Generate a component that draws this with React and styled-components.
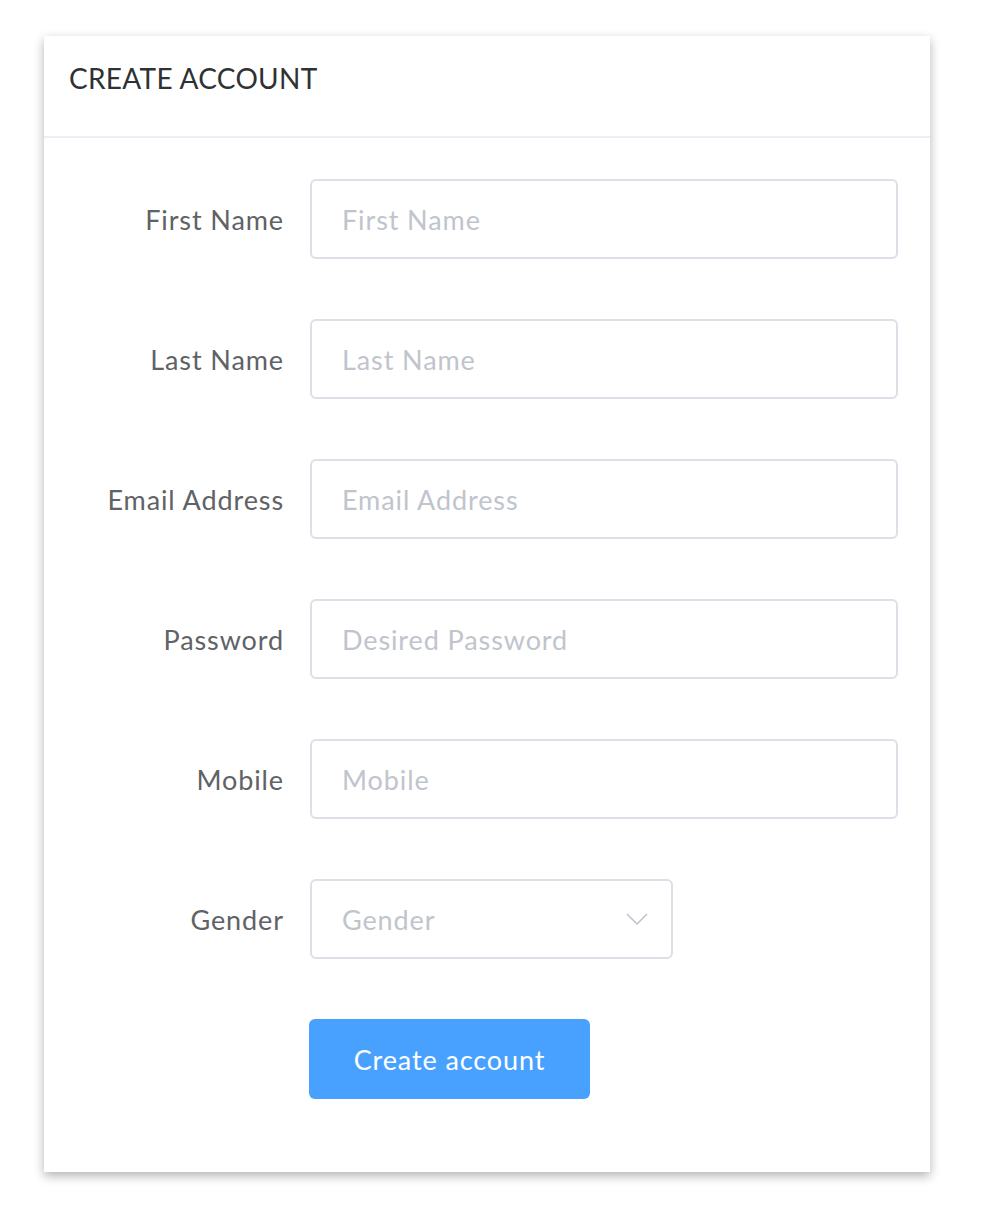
import React from 'react'
import styled, { createGlobalStyle } from 'styled-components'

const GlobalStyle = createGlobalStyle`
  body {
    margin: 0;
    background: #ffffff;
    font-family: Lato, "Open Sans", sans-serif;
  }
`

const Page = styled.div`
  padding: 36px 0 40px 44px;
`

const Card = styled.div`
  width: 886px;
  height: 1136px;
  background: #fff;
  box-shadow: 0 4px 10px rgba(0, 0, 0, 0.3);
  box-sizing: border-box;
`

const CardHeader = styled.div`
  height: 102px;
  box-sizing: border-box;
  border-bottom: 2px solid #ebeef5;
  padding: 0 25px 16px;
  display: flex;
  align-items: center;
`

const Title = styled.h2`
  margin: 0;
  font-size: 28px;
  font-weight: 400;
  color: #303133;
  letter-spacing: 0.3px;
`

const Form = styled.form`
  padding: 41px 32px 0 0;
  display: flex;
  flex-direction: column;
  gap: 60px;
`

const Row = styled.div`
  display: flex;
  align-items: center;
`

const Label = styled.label`
  width: 240px;
  flex: none;
  text-align: right;
  padding-right: 26px;
  font-size: 27px;
  letter-spacing: 0.9px;
  color: #606266;
`

const Field = styled.input`
  width: 588px;
  height: 80px;
  box-sizing: border-box;
  border: 2px solid #dcdfe6;
  border-radius: 6px;
  padding: 0 30px;
  font-family: inherit;
  font-size: 27px;
  letter-spacing: 0.9px;
  color: #606266;
  outline: none;
  &::placeholder {
    color: #c0c4cc;
  }
`

const SelectBox = styled.div`
  width: 363px;
  height: 80px;
  box-sizing: border-box;
  border: 2px solid #dcdfe6;
  border-radius: 6px;
  padding: 0 23px 0 30px;
  display: flex;
  align-items: center;
  justify-content: space-between;
  font-size: 27px;
  letter-spacing: 0.9px;
  color: #c0c4cc;
`

const Actions = styled.div`
  padding-left: 265px;
`

const Button = styled.button`
  width: 281px;
  height: 80px;
  border: none;
  border-radius: 6px;
  background: #49a1ff;
  color: #fff;
  font-family: inherit;
  font-size: 27px;
  letter-spacing: 0.9px;
  cursor: pointer;
`

const fields = [
  { label: 'First Name', placeholder: 'First Name' },
  { label: 'Last Name', placeholder: 'Last Name' },
  { label: 'Email Address', placeholder: 'Email Address' },
  { label: 'Password', placeholder: 'Desired Password', type: 'password' },
  { label: 'Mobile', placeholder: 'Mobile' },
]

export default function App() {
  return (
    <Page>
      <GlobalStyle />
      <Card>
        <CardHeader>
          <Title>CREATE ACCOUNT</Title>
        </CardHeader>
        <Form onSubmit={e => e.preventDefault()}>
          {fields.map(f => (
            <Row key={f.label}>
              <Label>{f.label}</Label>
              <Field type={f.type || 'text'} placeholder={f.placeholder} />
            </Row>
          ))}
          <Row>
            <Label>Gender</Label>
            <SelectBox>
              <span>Gender</span>
              <svg width="22" height="12" viewBox="0 0 22 12" fill="none">
                <path d="M1 1l10 10L21 1" stroke="#c0c4cc" strokeWidth="1.6" />
              </svg>
            </SelectBox>
          </Row>
          <Actions>
            <Button type="submit">Create account</Button>
          </Actions>
        </Form>
      </Card>
    </Page>
  )
}
